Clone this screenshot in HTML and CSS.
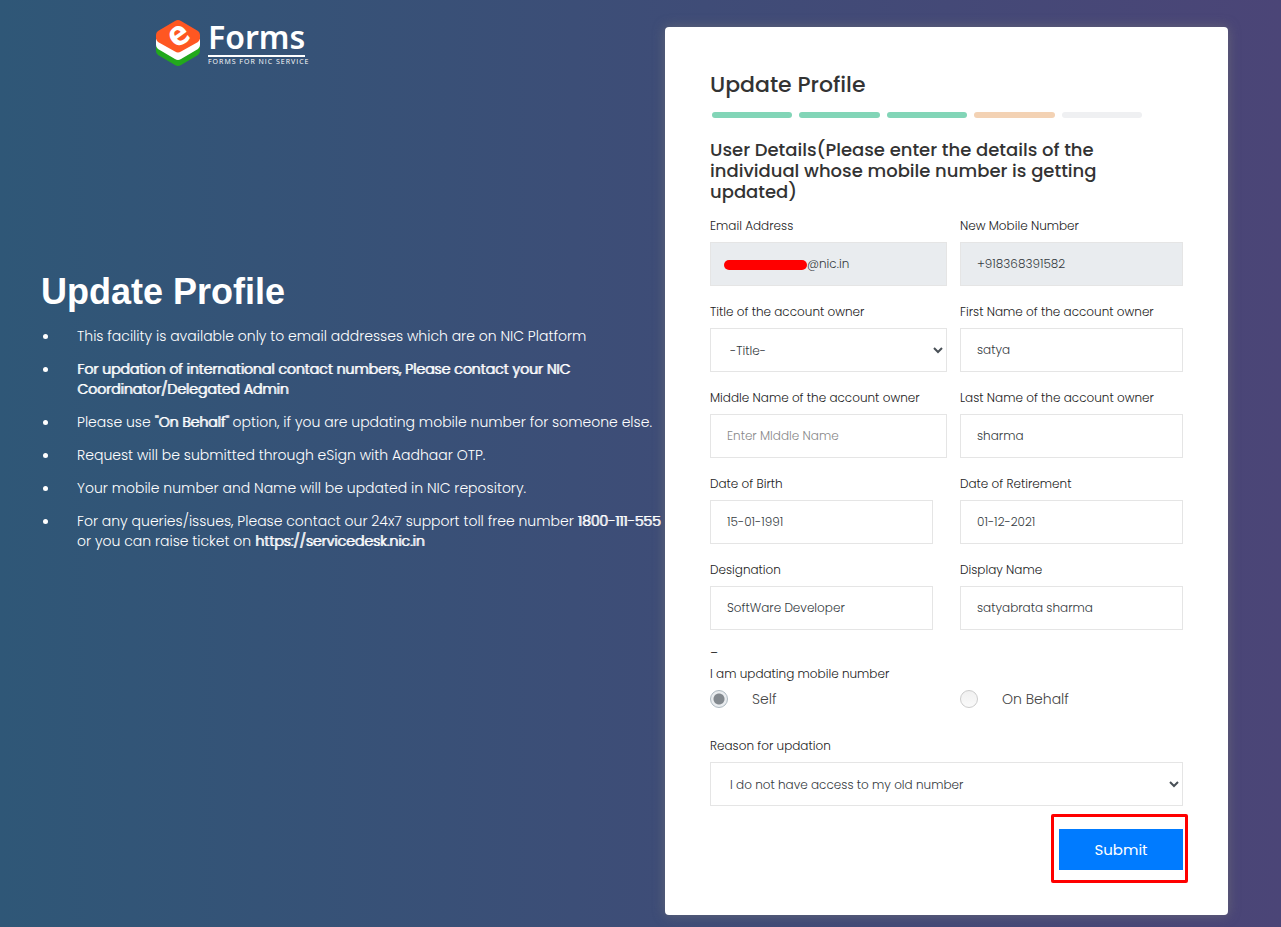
FILE: index.html
```html
<!DOCTYPE html>
<html lang="en">
<head>
<meta charset="utf-8">
<title>eForms - Update Profile</title>
<link rel="stylesheet" href="styles.css">
</head>
<body>
<main class="page">
  <section class="intro">
    <div class="logo">
      <svg class="logo-mark" viewBox="0 0 46 48" aria-hidden="true">
        <path fill="#22a81c" d="M1 27 L23 17 L45 27 V32 Q45 34.500 43 36 L26 46 Q23 48 20 46 L3 36 Q1 34.500 1 32Z"/>
        <path fill="#fff" d="M1 20 L23 12 L45 20 V26 Q45 28.500 43 30 L26 40 Q23 42 20 40 L3 30 Q1 28.500 1 26Z"/>
        <path fill="#ff5722" d="M20 2 Q23 0 26 2 L43 12 Q45 13.500 45 16 V19 Q45 21.500 43 23 L26 32.500 Q23 34.500 20 32.500 L3 23 Q1 21.500 1 19 V16 Q1 13.500 3 12Z"/>
        <text class="logo-e" x="24" y="26" text-anchor="middle" transform="rotate(-36 24 17)">e</text>
      </svg>
      <div class="logo-words">
        <span class="logo-name">Forms</span>
        <span class="logo-tag">FORMS FOR NIC SERVICE</span>
      </div>
    </div>
    <div class="intro-body">
      <h1 class="intro-title">Update Profile</h1>
      <ul class="notes">
        <li>This facility is available only to email addresses which are on NIC Platform</li>
        <li><b>For updation of international contact numbers, Please contact your NIC Coordinator/Delegated Admin</b></li>
        <li>Please use <b>"On Behalf"</b> option, if you are updating mobile number for someone else.</li>
        <li>Request will be submitted through eSign with Aadhaar OTP.</li>
        <li>Your mobile number and Name will be updated in NIC repository.</li>
        <li>For any queries/issues, Please contact our 24x7 support toll free number <b class="phone">1800-111-555</b> or you can raise ticket on <b>https://servicedesk.nic.in</b></li>
      </ul>
    </div>
  </section>

  <form class="card">
    <h2 class="card-title">Update Profile</h2>
    <div class="steps">
      <span class="step done"></span><span class="step done"></span><span class="step done"></span><span class="step current"></span><span class="step"></span>
    </div>
    <h3 class="card-subtitle">User Details(Please enter the details of the individual whose mobile number is getting updated)</h3>

    <div class="fields">
      <div class="field wide">
        <label for="email">Email Address</label>
        <div class="masked">
          <input class="control email" id="email" type="text" value="@nic.in" readonly>
          <span class="mask"></span>
        </div>
      </div>
      <div class="field">
        <label for="mobile">New Mobile Number</label>
        <input class="control" id="mobile" type="text" value="+918368391582" readonly>
      </div>
      <div class="field wide">
        <label for="title">Title of the account owner</label>
        <div class="select-box">
          <select class="control" id="title"><option>-Title-</option></select>
          <svg class="chevron" viewBox="0 0 10 7" aria-hidden="true"><path d="M1 1 L5 5 L9 1"/></svg>
        </div>
      </div>
      <div class="field">
        <label for="first">First Name of the account owner</label>
        <input class="control" id="first" type="text" value="satya">
      </div>
      <div class="field wide">
        <label for="middle">Middle Name of the account owner</label>
        <input class="control" id="middle" type="text" placeholder="Enter MIddle Name">
      </div>
      <div class="field">
        <label for="last">Last Name of the account owner</label>
        <input class="control" id="last" type="text" value="sharma">
      </div>
      <div class="field">
        <label for="birth">Date of Birth</label>
        <input class="control" id="birth" type="text" value="15-01-1991">
      </div>
      <div class="field">
        <label for="retire">Date of Retirement</label>
        <input class="control" id="retire" type="text" value="01-12-2021">
      </div>
      <div class="field">
        <label for="designation">Designation</label>
        <input class="control" id="designation" type="text" value="SoftWare Developer">
      </div>
      <div class="field">
        <label for="display">Display Name</label>
        <input class="control" id="display" type="text" value="satyabrata sharma">
      </div>
    </div>

    <p class="dash">_</p>
    <fieldset class="who">
      <legend>I am updating mobile number</legend>
      <div class="choices">
        <label class="choice"><input type="radio" name="who" checked>Self</label>
        <label class="choice"><input type="radio" name="who">On Behalf</label>
      </div>
    </fieldset>

    <div class="reason">
      <label for="reason">Reason for updation</label>
      <div class="select-box">
        <select class="control" id="reason"><option>I do not have access to my old number</option></select>
        <svg class="chevron" viewBox="0 0 10 7" aria-hidden="true"><path d="M1 1 L5 5 L9 1"/></svg>
      </div>
    </div>

    <div class="actions">
      <div class="highlight"><button class="submit" type="submit">Submit</button></div>
    </div>
  </form>
</main>
</body>
</html>
```

FILE: styles.css
```css
* { box-sizing: border-box; }

body {
  margin: 0;
  min-height: 100vh;
  background: linear-gradient(90deg, #2f5777, #3f4c77 55%, #4b4577);
  color: #222;
  font-family: Poppins, Inter, sans-serif;
  font-size: 12px;
  font-weight: 300;
}

.page {
  display: grid;
  grid-template-columns: 665fr 563fr 53fr;
  align-items: start;
  min-height: 100vh;
}

/* Left pane */
.intro {
  display: flex;
  flex-direction: column;
  padding: 19px 4px 0 41px;
  color: #fff;
}

.logo {
  display: flex;
  gap: 7px;
  margin-left: 114px;
}

.logo-mark {
  width: 46px;
  height: 48px;
  overflow: visible;
}

.logo-e {
  fill: #fff;
  font: bold 34px "Open Sans", sans-serif;
}

.logo-words {
  display: flex;
  flex-direction: column;
  width: 97px;
}

.logo-name {
  border-bottom: 2px solid #fff;
  font: 600 32px/36px "Noto Sans", sans-serif;
}

.logo-tag {
  padding-top: 1px;
  font: 7px/8px "Open Sans", sans-serif;
  letter-spacing: 1px;
  white-space: nowrap;
}

.intro-body { padding-top: 203px; }

.intro-title {
  margin: 0;
  font: bold 36px/44px "Liberation Sans", Arial, sans-serif;
}

.notes {
  display: grid;
  gap: 13px;
  margin: 12px 0 0;
  padding: 0 0 0 36px;
  list-style: none;
  font-size: 14px;
  line-height: 20px;
}

.notes li { position: relative; }

.notes li::before {
  content: "";
  position: absolute;
  left: -34px;
  top: 8px;
  width: 5px;
  height: 5px;
  border-radius: 50%;
  background: #fff;
}

.notes b {
  font-weight: inherit;
  text-shadow: 1px 0 #fff;
}

.notes .phone { white-space: nowrap; }

/* Form card */
.card {
  margin-top: 27px;
  margin-bottom: 12px;
  padding: 42px 45px 32px;
  border-radius: 4px;
  background: #fff;
  box-shadow: 0 0 12px rgba(120, 120, 120, 0.6);
}

.card-title {
  margin: 0;
  color: #333;
  font-size: 22px;
  font-weight: 500;
  line-height: 32px;
}

.steps {
  display: flex;
  gap: 7px;
  margin: 11px 41px 0 2px;
}

.step {
  flex: 1;
  height: 6px;
  border-radius: 3px;
  background: #eff0f2;
}

.step.done { background: #82d5b7; }
.step.current { background: #f3d2b4; }

.card-subtitle {
  margin: 21px 60px 0 0;
  color: #333;
  font-size: 18px;
  font-weight: 500;
  line-height: 21px;
}

.fields {
  display: grid;
  grid-template-columns: 1fr 1fr;
  gap: 15px 27px;
  margin-top: 14px;
}

.field label,
.reason > label,
.who legend {
  display: block;
  padding: 0;
  line-height: 20px;
}

.field label,
.reason > label { margin-bottom: 6px; }

.field.wide { margin-right: -14px; }

.control {
  display: block;
  width: 100%;
  height: 44px;
  padding: 0 16px;
  border: 1px solid #e5e5e5;
  border-radius: 0;
  background: #fff;
  color: #343a40;
  font: inherit;
}

.field .control { margin-bottom: 1px; }

.control::placeholder { color: #888; opacity: 1; }
.control:read-only:not(select) { background: #e9ecef; }

.control.email { padding-left: 96px; }

.masked,
.select-box { position: relative; }

.mask {
  position: absolute;
  left: 14px;
  top: 18px;
  width: 83px;
  height: 10px;
  border-radius: 5px;
  background: #f00;
}

select.control {
  padding-left: 19px;
  appearance: none;
}

.chevron {
  position: absolute;
  right: 4px;
  top: 19px;
  width: 10px;
  height: 7px;
  fill: none;
  stroke: #495057;
  stroke-width: 2;
  pointer-events: none;
}

.dash {
  margin: 7px 0 0;
  line-height: 20px;
}

.who {
  margin: 6px 0 0;
  padding: 0;
  border: 0;
}

.choices {
  display: grid;
  grid-template-columns: 1fr 1fr;
  gap: 27px;
  margin-top: 5px;
}

.choice {
  display: flex;
  align-items: center;
  gap: 24px;
  color: #444;
  font-size: 14px;
  line-height: 20px;
}

.choice input {
  width: 18px;
  height: 18px;
  margin: 0;
  border: 1px solid #ccc;
  border-radius: 50%;
  background: linear-gradient(#f0f0f0, #fafafa);
  appearance: none;
}

.choice input:checked {
  border-color: #adb8c0;
  background: radial-gradient(circle, #83898f 5px, #e9ecef 6px);
}

.reason { margin-top: 27px; }

.actions {
  display: flex;
  justify-content: flex-end;
  margin-top: 8px;
}

.highlight {
  margin-right: -5px;
  padding: 12px 2px 10px 5px;
  border: 3px solid #f00;
  border-radius: 2px;
}

.submit {
  width: 124px;
  height: 41px;
  border: 0;
  background: #007bff;
  color: #fff;
  font: 15px Poppins, Inter, sans-serif;
}
```
